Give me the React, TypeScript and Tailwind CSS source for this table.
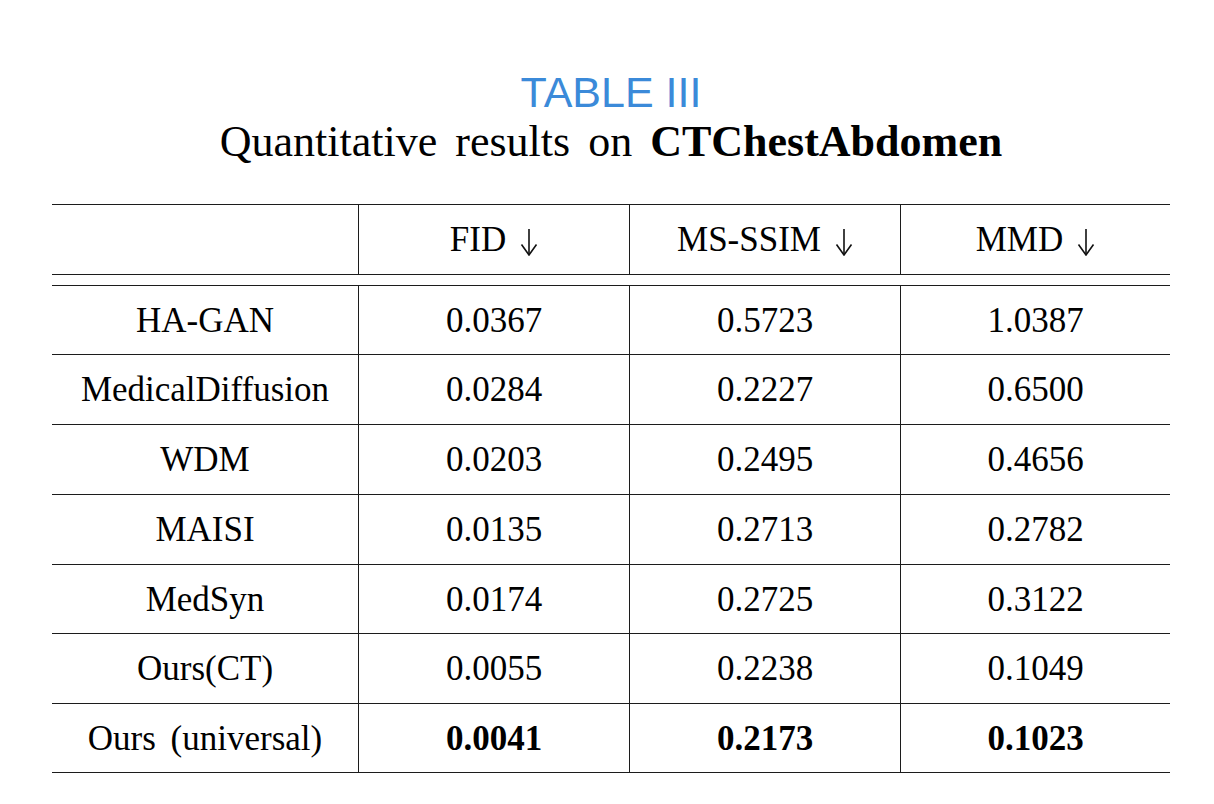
import React from 'react';

const rows = [
  { name: 'HA-GAN', fid: '0.0367', ssim: '0.5723', mmd: '1.0387', h: 'h-[69px]' },
  { name: 'MedicalDiffusion', fid: '0.0284', ssim: '0.2227', mmd: '0.6500', h: 'h-[70px]' },
  { name: 'WDM', fid: '0.0203', ssim: '0.2495', mmd: '0.4656', h: 'h-[70px]' },
  { name: 'MAISI', fid: '0.0135', ssim: '0.2713', mmd: '0.2782', h: 'h-[70px]' },
  { name: 'MedSyn', fid: '0.0174', ssim: '0.2725', mmd: '0.3122', h: 'h-[69px]' },
  { name: 'Ours(CT)', fid: '0.0055', ssim: '0.2238', mmd: '0.1049', h: 'h-[70px]' },
  { name: 'Ours (universal)', fid: '0.0041', ssim: '0.2173', mmd: '0.1023', h: 'h-[69px]', best: true },
];

const DownArrow = () => (
  <svg width="18" height="27" viewBox="0 0 18 27" className="inline-block align-[-5px] ml-[14px]" fill="none" stroke="#111" strokeWidth="1.6">
    <path d="M9 0 V26" />
    <path d="M1.5 15.5 L9 26 L16.5 15.5" strokeLinejoin="miter" />
  </svg>
);

const Cell: React.FC<{ first?: boolean; w: string; bold?: boolean; children: React.ReactNode }> = ({ first, w, bold, children }) => (
  <div className={`${w} flex items-center justify-center ${first ? '' : 'border-l border-[#1c1c1c]'} ${bold ? 'font-bold' : ''}`}>
    <span className="leading-none">{children}</span>
  </div>
);

const App: React.FC = () => {
  return (
    <div className="w-[1214px] h-[804px] bg-white text-black font-['Liberation_Serif','Times_New_Roman',serif]">
      <div className="ml-[52px] w-[1118px] pt-[71px]">
        <div className="text-center text-[43px] leading-none text-[#3b8ad9] font-['Liberation_Sans',Arial,sans-serif]">TABLE III</div>
        <div className="mt-[6px] text-center text-[44px] leading-none [word-spacing:7px]">
          Quantitative results on <span className="font-bold">CTChestAbdomen</span>
        </div>

        <div className="mt-[40px] text-[35px]">
          <div className="flex h-[71px] border-y border-[#1c1c1c]">
            <Cell first w="w-[306px]">{''}</Cell>
            <Cell w="w-[271px]">FID<DownArrow /></Cell>
            <Cell w="w-[271px]">MS-SSIM<DownArrow /></Cell>
            <Cell w="w-[270px]">MMD<DownArrow /></Cell>
          </div>
          <div className="h-[10px]" />
          <div className="border-t border-[#1c1c1c]">
            {rows.map((r) => (
              <div key={r.name} className={`flex ${r.h} border-b border-[#1c1c1c]`}>
                <Cell first w="w-[306px]">
                  <span className={r.best ? '[word-spacing:6px]' : ''}>{r.name}</span>
                </Cell>
                <Cell w="w-[271px]" bold={r.best}>{r.fid}</Cell>
                <Cell w="w-[271px]" bold={r.best}>{r.ssim}</Cell>
                <Cell w="w-[270px]" bold={r.best}>{r.mmd}</Cell>
              </div>
            ))}
          </div>
        </div>
      </div>
    </div>
  );
};

export default App;
